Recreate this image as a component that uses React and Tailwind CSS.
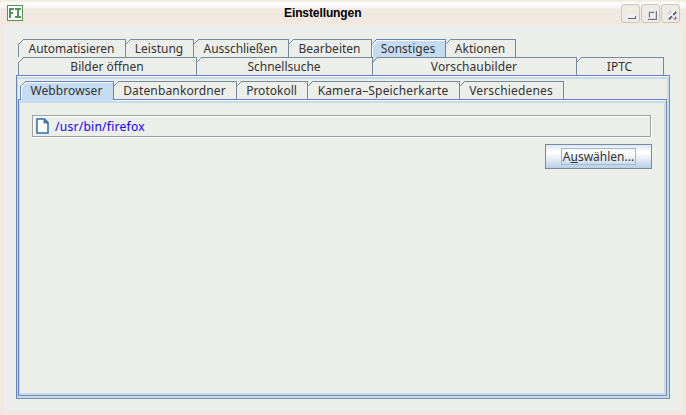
import React from "react";

function Tab({ label, width, tracking = "", selected = false, first = false, underSelected = false }) {
  const line = selected ? "#6382bf" : "#768a9e";
  return (
    <div className={`relative flex h-[18px] shrink-0 items-center justify-center ${width}`}>
      <svg className="absolute inset-0 h-full w-full overflow-visible" shapeRendering="crispEdges">
        {selected && (
          <>
            <rect x="6" y="1" height="17" fill="#c5dcf0" style={{ width: "calc(100% - 6px)" }} />
            <path d="M1 18V6L6 1V18Z" fill="#c5dcf0" />
            <path d="M1 18V6h1V5h1V4h1V3h1V2h1V1h1v1H6v1H5v1H4v1H3v1H2v12z" fill="#fff" />
            <rect x="6" y="1" height="1" fill="#fff" style={{ width: "calc(100% - 6px)" }} />
          </>
        )}
        {underSelected && <path d="M1 0h5v1H5v1H4v1H3v1H2v1H1z" fill="#c5dcf0" />}
        <path d="M1 5h1v-1h1v-1h1v-1h1v-1h1v-1h-1v1h-1v1h-1v1h-1v1h-1z" fill={line} />
        <path d="M1 4h1v1H1zM2 3h1v1H2zM3 2h1v1H3zM4 1h1v1H4zM5 0h1v1H5z" fill={line} />
        <rect x="6" y="0" height="1" fill={line} style={{ width: "calc(100% - 6px)" }} />
        {first && <rect x="0" y="5" width="1" height="13" fill={line} />}
      </svg>
      <div className={`absolute top-0 -right-px h-full w-px ${selected ? "bg-[#6382bf]" : "bg-[#768a9e]"}`} />
      <span className={`relative mt-[2px] whitespace-nowrap ${tracking}`}>{label}</span>
    </div>
  );
}

function WinButton({ children }) {
  return (
    <div className="h-[19px] w-[19px] rounded-[3px] border border-[#c9c7b9] bg-[#edebe3]">
      <svg viewBox="0 0 17 17" className="h-[17px] w-[17px]">{children}</svg>
    </div>
  );
}

export default function App() {
  return (
    <div className="h-[415px] w-[686px] overflow-hidden bg-[#f1ede2] font-['Noto_Sans',sans-serif] text-[12px] leading-[18px] text-[#333333]">
      <div className="flex h-full w-full flex-col rounded-t-[5px] bg-[#f1e8e1]">
        <header className="flex h-[25px] shrink-0 items-start rounded-t-[5px] bg-[linear-gradient(#f1ede2_0px,#f1ede2_1px,#ffffff_3px,#f8f4f1_8px,#f1e8e1_9px)] pl-[7px]">
          <svg width="16" height="16" className="mt-[5px]" shapeRendering="crispEdges">
            <rect x=".5" y=".5" width="15" height="15" fill="#fff" stroke="#559457" />
            <path d="M2 3h5v2H4v2h2v2H4v4H2zM8 3h6v2h-2v6h2v2H8v-2h2V5H8z" fill="#559457" />
          </svg>
          <h1 className="mt-[4px] ml-[261px] w-[77px] font-['Liberation_Sans',sans-serif] text-[12px] font-bold tracking-[-0.1px] whitespace-nowrap text-black">Einstellungen</h1>
          <div className="mt-[4px] ml-[260px] flex gap-px">
            <WinButton>
              <path d="M6 11h8v3H6z" fill="#66666a" />
              <path d="M5 10h8v3H5z" fill="#f0f0fa" />
            </WinButton>
            <WinButton>
              <path d="M7 7h7v7H7z" fill="none" stroke="#77777b" strokeWidth="2" />
              <path d="M6 6h7v7H6z" fill="none" stroke="#f0f0fa" strokeWidth="1.500" />
            </WinButton>
            <WinButton>
              <path d="M6.500 6.500l7.500 7.500M14 6.500L6.500 14" stroke="#55555a" strokeWidth="2.500" />
              <path d="M5.500 5.500l7.500 7.500M13 5.500L5.500 13" stroke="#f0f0fa" strokeWidth="2" />
            </WinButton>
          </div>
        </header>

        <main className="mx-[4px] mb-[4px] flex-1 bg-[#eceee9] pt-[14px] pl-[12px]">
          <div className="ml-[2px] flex">
            <Tab first label="Automatisieren" width="w-[107px]" tracking="tracking-[-0.05px]" />
            <Tab label="Leistung" width="w-[68px]" />
            <Tab label="Ausschließen" width="w-[95px]" tracking="tracking-[-0.05px]" />
            <Tab label="Bearbeiten" width="w-[83px]" />
            <Tab first selected label="Sonstiges" width="w-[74px]" />
            <Tab label="Aktionen" width="w-[70px]" />
          </div>
          <div className="ml-[2px] flex">
            <Tab first label="Bilder öffnen" width="w-[178px]" />
            <Tab label="Schnellsuche" width="w-[176px]" />
            <Tab underSelected label="Vorschaubilder" width="w-[204px]" tracking="tracking-[0.1px]" />
            <Tab label="IPTC" width="w-[87px]" />
          </div>

          <section className="h-[324px] w-[654px] border border-t-[#6382bf] border-r-[#7a8dab] border-b-[#7a8dab] border-l-[#6382bf]">
            <div className="h-full border-t border-white">
              <div className="h-full border-t-2 border-r-2 border-b-2 border-l border-[#c5dcf0] pt-[2px]">
                <div className="relative z-10 ml-[2px] flex">
                  <Tab first selected label="Webbrowser" width="w-[93px]" tracking="tracking-[0.1px]" />
                  <Tab label="Datenbankordner" width="w-[123px]" tracking="tracking-[0.15px]" />
                  <Tab label="Protokoll" width="w-[71px]" />
                  <Tab label="Kamera–Speicherkarte" width="w-[152px]" tracking="tracking-[0.16px]" />
                  <Tab label="Verschiedenes" width="w-[104px]" tracking="tracking-[0.16px]" />
                </div>
                <div className="h-[297px] border border-t-[#6382bf] border-r-[#7a8dab] border-b-[#7a8dab] border-l-[#6382bf]">
                  <div className="relative h-full border-t border-white">
                    <div className="absolute -top-[2px] left-[2px] h-[2px] w-[92px] bg-[#c5dcf0]" />
                    <div className="h-full border-t-2 border-r-2 border-b-2 border-l border-[#c5dcf0] pt-[12px] pl-[12px]">
                      <div className="flex h-[22px] w-[619px] items-center border border-[#9e9e9e] pl-[3px] shadow-[1px_1px_0_#fff,inset_1px_1px_0_#fff]">
                        <svg width="13" height="16" viewBox="0 0 13 16">
                          <path d="M1 1h7.500L12 4.500V15H1z" fill="#fff" stroke="#2f6ea3" strokeWidth="1.500" />
                          <path d="M8 1.500v3.500h4z" fill="#6c9cc2" stroke="#2f6ea3" />
                        </svg>
                        <span className="mt-[2px] ml-[6px] tracking-[0.27px] text-[#0f00ff]">/usr/bin/firefox</span>
                      </div>
                      <button className="mt-[7px] ml-[513px] flex h-[25px] w-[107px] items-center justify-center border border-[#768aa5] bg-[linear-gradient(#dde8f3_0%,#ffffff_30%,#ffffff_35%,#b8cfe5_100%)]">
                        <span className="flex h-[17px] w-[75px] items-center justify-center border border-[#a3b8cc] whitespace-nowrap"><span>A<u>u</u>swählen...</span></span>
                      </button>
                    </div>
                  </div>
                </div>
              </div>
            </div>
          </section>
        </main>
      </div>
    </div>
  );
}
